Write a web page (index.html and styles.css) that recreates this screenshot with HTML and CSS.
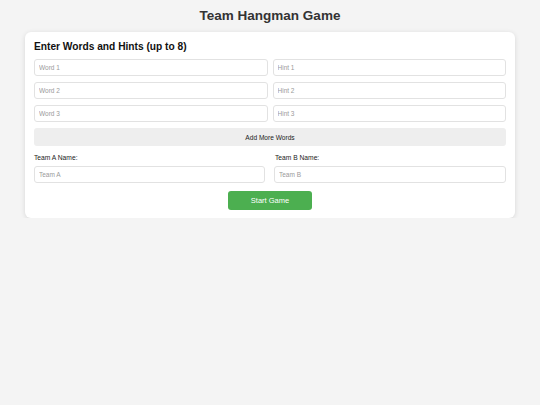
FILE: index.html
```html
<!DOCTYPE html>
<html>
<head>
<meta charset="utf-8">
<link rel="stylesheet" href="styles.css">
</head>
<body>
<h1 class="title">Team Hangman Game</h1>
<div class="card">
  <h2 class="heading">Enter Words and Hints (up to 8)</h2>
  <div class="words">
    <input class="field" placeholder="Word 1">
    <input class="field" placeholder="Hint 1">
    <input class="field" placeholder="Word 2">
    <input class="field" placeholder="Hint 2">
    <input class="field" placeholder="Word 3">
    <input class="field" placeholder="Hint 3">
  </div>
  <button class="add-btn">Add More Words</button>
  <div class="teams">
    <div class="team">
      <label class="label">Team A Name:</label>
      <input class="field" placeholder="Team A">
    </div>
    <div class="team">
      <label class="label">Team B Name:</label>
      <input class="field" placeholder="Team B">
    </div>
  </div>
  <div class="start-row">
    <button class="start-btn">Start Game</button>
  </div>
</div>
</body>
</html>
```
FILE: styles.css
```css
* { box-sizing: border-box; }
body {
  margin: 0;
  background: #f4f4f4;
  font-family: "Liberation Sans", Arial, sans-serif;
  color: #333;
}
.title {
  margin: 0;
  padding-top: 7px;
  height: 32px;
  font-size: 13.5px;
  line-height: 18px;
  text-align: center;
  color: #333;
}
.card {
  width: 490px;
  margin: 0 auto;
  background: #fff;
  border-radius: 6px;
  box-shadow: 0 1px 5px rgba(0,0,0,0.12);
  padding: 8px 9px 8px 9px;
}
.heading {
  margin: 0 0 6px 0;
  font-size: 10.2px;
  line-height: 13px;
  color: #111;
}
.words {
  display: grid;
  grid-template-columns: 1fr 1fr;
  column-gap: 5px;
  row-gap: 6px;
}
.field {
  display: block;
  width: 100%;
  height: 17px;
  border: 1px solid #e2e2e2;
  border-radius: 3px;
  padding: 0 4px;
  font-family: "Liberation Sans", Arial, sans-serif;
  font-size: 6.5px;
  color: #333;
  background: #fff;
}
.field::placeholder { color: #9a9a9a; }
.add-btn {
  display: block;
  width: 100%;
  height: 18px;
  margin-top: 6px;
  border: none;
  border-radius: 3px;
  background: #eee;
  font-family: "Liberation Sans", Arial, sans-serif;
  font-size: 6.6px;
  color: #222;
}
.teams {
  display: grid;
  grid-template-columns: 231px 232px;
  column-gap: 9px;
  margin-top: 7px;
}
.label {
  display: block;
  font-size: 6.7px;
  line-height: 10px;
  margin-bottom: 3px;
  color: #222;
}
.teams .team:last-child .label { padding-left: 1px; }
.start-row {
  display: flex;
  justify-content: center;
  margin-top: 8px;
}
.start-btn {
  width: 84px;
  height: 19px;
  border: none;
  border-radius: 3px;
  background: #4caf50;
  color: #fff;
  font-family: "Liberation Sans", Arial, sans-serif;
  font-size: 7.5px;
}
```
